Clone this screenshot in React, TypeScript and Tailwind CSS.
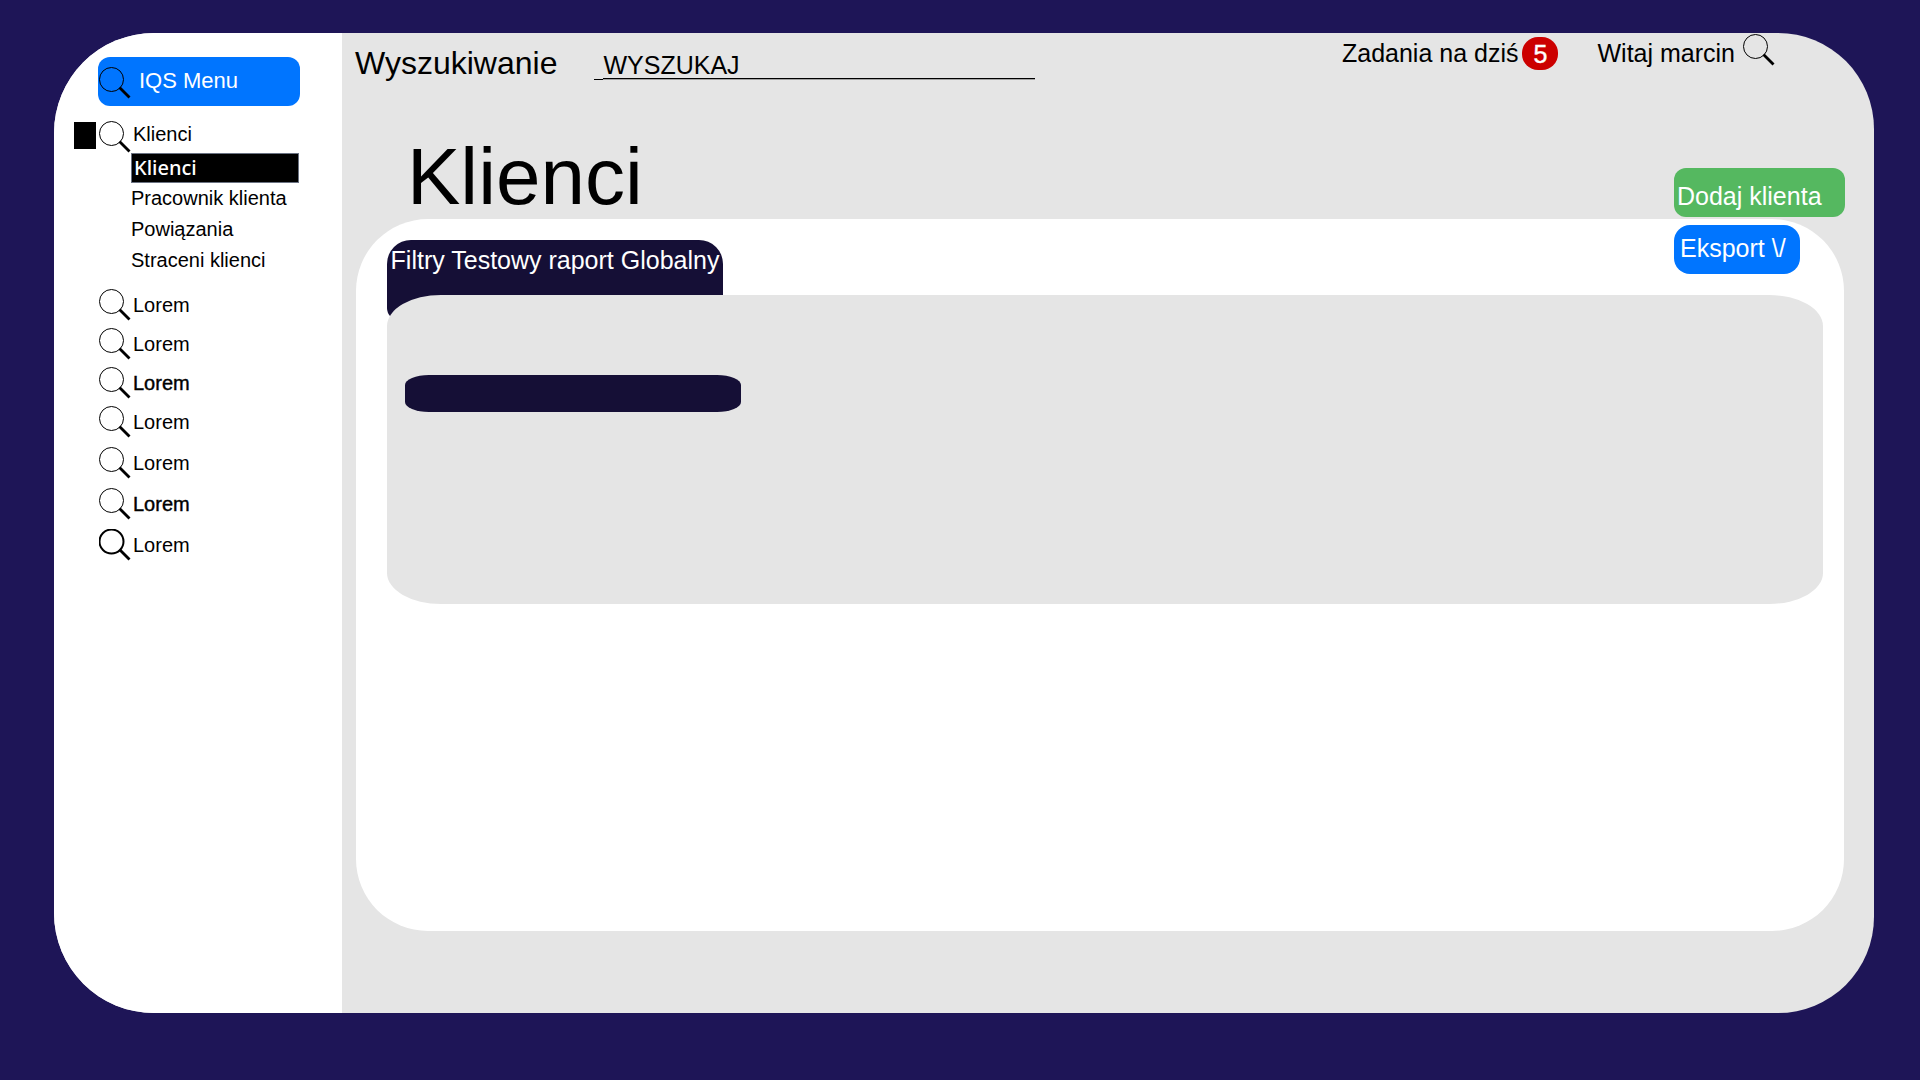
import React from "react";

function Magnifier({ ring = 1 }: { ring?: number }) {
  return (
    <svg className="h-8 w-8 shrink-0" viewBox="0 0 32 32" fill="none" stroke="#000" aria-hidden="true">
      <circle cx="12.5" cy="12.5" r="12" strokeWidth={ring} />
      <path d="M20.5 20.5 L30.5 30.5" strokeWidth="2.8" />
    </svg>
  );
}

const subItems = ["Pracownik klienta", "Powiązania", "Straceni klienci"];

const items = [
  { tall: false, strong: false, ring: 1 },
  { tall: false, strong: false, ring: 1 },
  { tall: false, strong: true, ring: 1 },
  { tall: true, strong: false, ring: 1 },
  { tall: true, strong: false, ring: 1 },
  { tall: true, strong: true, ring: 1 },
  { tall: true, strong: false, ring: 2 },
];

function Sidebar() {
  return (
    <aside className="w-72 shrink-0 bg-white pt-6 pl-5 text-xl leading-6">
      <button
        type="button"
        className="ml-6 flex h-[49px] w-[202px] items-center gap-2 rounded-xl bg-[#0075ff] text-left text-[22px] text-white"
      >
        <span className="pt-0.5 pl-px">
          <Magnifier />
        </span>
        <span className="pb-0.5">IQS Menu</span>
      </button>
      <nav>
        <a href="#klienci" className="mt-[15px] flex">
          <span className="mt-px mr-[3px] h-[27px] w-[22px] bg-black" />
          <Magnifier />
          <span className="pt-px pl-0.5">Klienci</span>
        </a>
        <ul className="ml-[57px]">
          <li>
            <a
              href="#lista"
              className="flex h-[30px] w-[168px] items-center border border-gray-500 bg-black pl-0.5 font-['Noto_Sans',sans-serif] font-medium text-white"
            >
              Klienci
            </a>
          </li>
          {subItems.map((label) => (
            <li key={label} className="h-[31px] pt-[3px]">
              <a href="#lista">{label}</a>
            </li>
          ))}
        </ul>
        <ul className="mt-[13px] ml-[25px]">
          {items.map((item, i) => (
            <li key={i} className={item.tall ? "h-[41px]" : "h-[39px]"}>
              <a href="#lorem" className="flex">
                <Magnifier ring={item.ring} />
                <span className={item.strong ? "pt-1 pl-0.5 [-webkit-text-stroke:0.4px_black]" : "pt-1 pl-0.5"}>
                  Lorem
                </span>
              </a>
            </li>
          ))}
        </ul>
      </nav>
    </aside>
  );
}

function TopBar() {
  return (
    <header className="flex items-start pr-[99px] pl-[13px] text-[25px] leading-7">
      <label htmlFor="search" className="pt-3 text-[32px] leading-9">
        Wyszukiwanie
      </label>
      <div className="ml-[37px] flex items-end pt-[18px]">
        <span className="h-px w-[9px] bg-black" />
        <input
          id="search"
          type="text"
          placeholder="WYSZUKAJ"
          className="mb-px h-7 w-[432px] border-b border-black bg-transparent shadow-[0_1px_0_#a3a3a3] outline-none placeholder:text-black placeholder:opacity-100"
        />
      </div>
      <div className="ml-auto flex pt-1.5">
        <a href="#zadania">Zadania na dziś</a>
        <span className="-mt-0.5 ml-1 flex h-[33px] w-9 items-center justify-center rounded-2xl bg-[#cc0000] text-white [-webkit-text-stroke:0.4px_white]">
          5
        </span>
      </div>
      <a href="#konto" className="ml-[39px] flex">
        <span className="pt-1.5">Witaj marcin</span>
        <span className="pt-px pl-2">
          <Magnifier />
        </span>
      </a>
    </header>
  );
}

export default function App() {
  return (
    <div className="min-h-screen bg-[#1e1557] pt-[33px] pr-[46px] pb-[67px] pl-[54px] font-['Liberation_Sans',Arial,sans-serif] text-black">
      <div className="flex min-h-[980px] overflow-hidden rounded-l-[100px] rounded-r-[96px] bg-[#e5e5e5]">
        <Sidebar />
        <main className="flex min-w-0 grow flex-col pb-[82px]">
          <TopBar />
          <div className="mt-[54px] flex h-[84px] justify-between pr-[29px] pl-[65px]">
            <h1 className="text-[80px] leading-[84px]">Klienci</h1>
            <div className="relative z-10 flex flex-col items-start gap-2 pt-[33px] text-[25px] leading-7 text-white">
              <button type="button" className="h-[49px] w-[171px] shrink-0 rounded-xl bg-[#55b860] pt-1.5 pl-[3px] text-left">
                Dodaj klienta
              </button>
              <button type="button" className="h-[49px] w-[126px] shrink-0 rounded-2xl bg-[#0075ff] pb-1 pl-1.5 text-left">
                Eksport \/
              </button>
            </div>
          </div>
          <section className="mr-[30px] ml-3.5 grow rounded-[72px] bg-white px-[31px] pt-[21px]">
            <h2 className="-mb-[25px] h-20 w-[336px] rounded-3xl rounded-b-xl bg-[#150f36] pt-1.5 text-center text-[25px] leading-7 whitespace-nowrap text-white">
              Filtry Testowy raport Globalny
            </h2>
            <div className="relative -mr-[10px] h-[309px] rounded-[54px/31px] bg-[#e5e5e5] px-[18px] pt-20">
              <div className="h-[37px] w-[336px] rounded-[24px/10px] bg-[#150f36]" />
            </div>
          </section>
        </main>
      </div>
    </div>
  );
}
